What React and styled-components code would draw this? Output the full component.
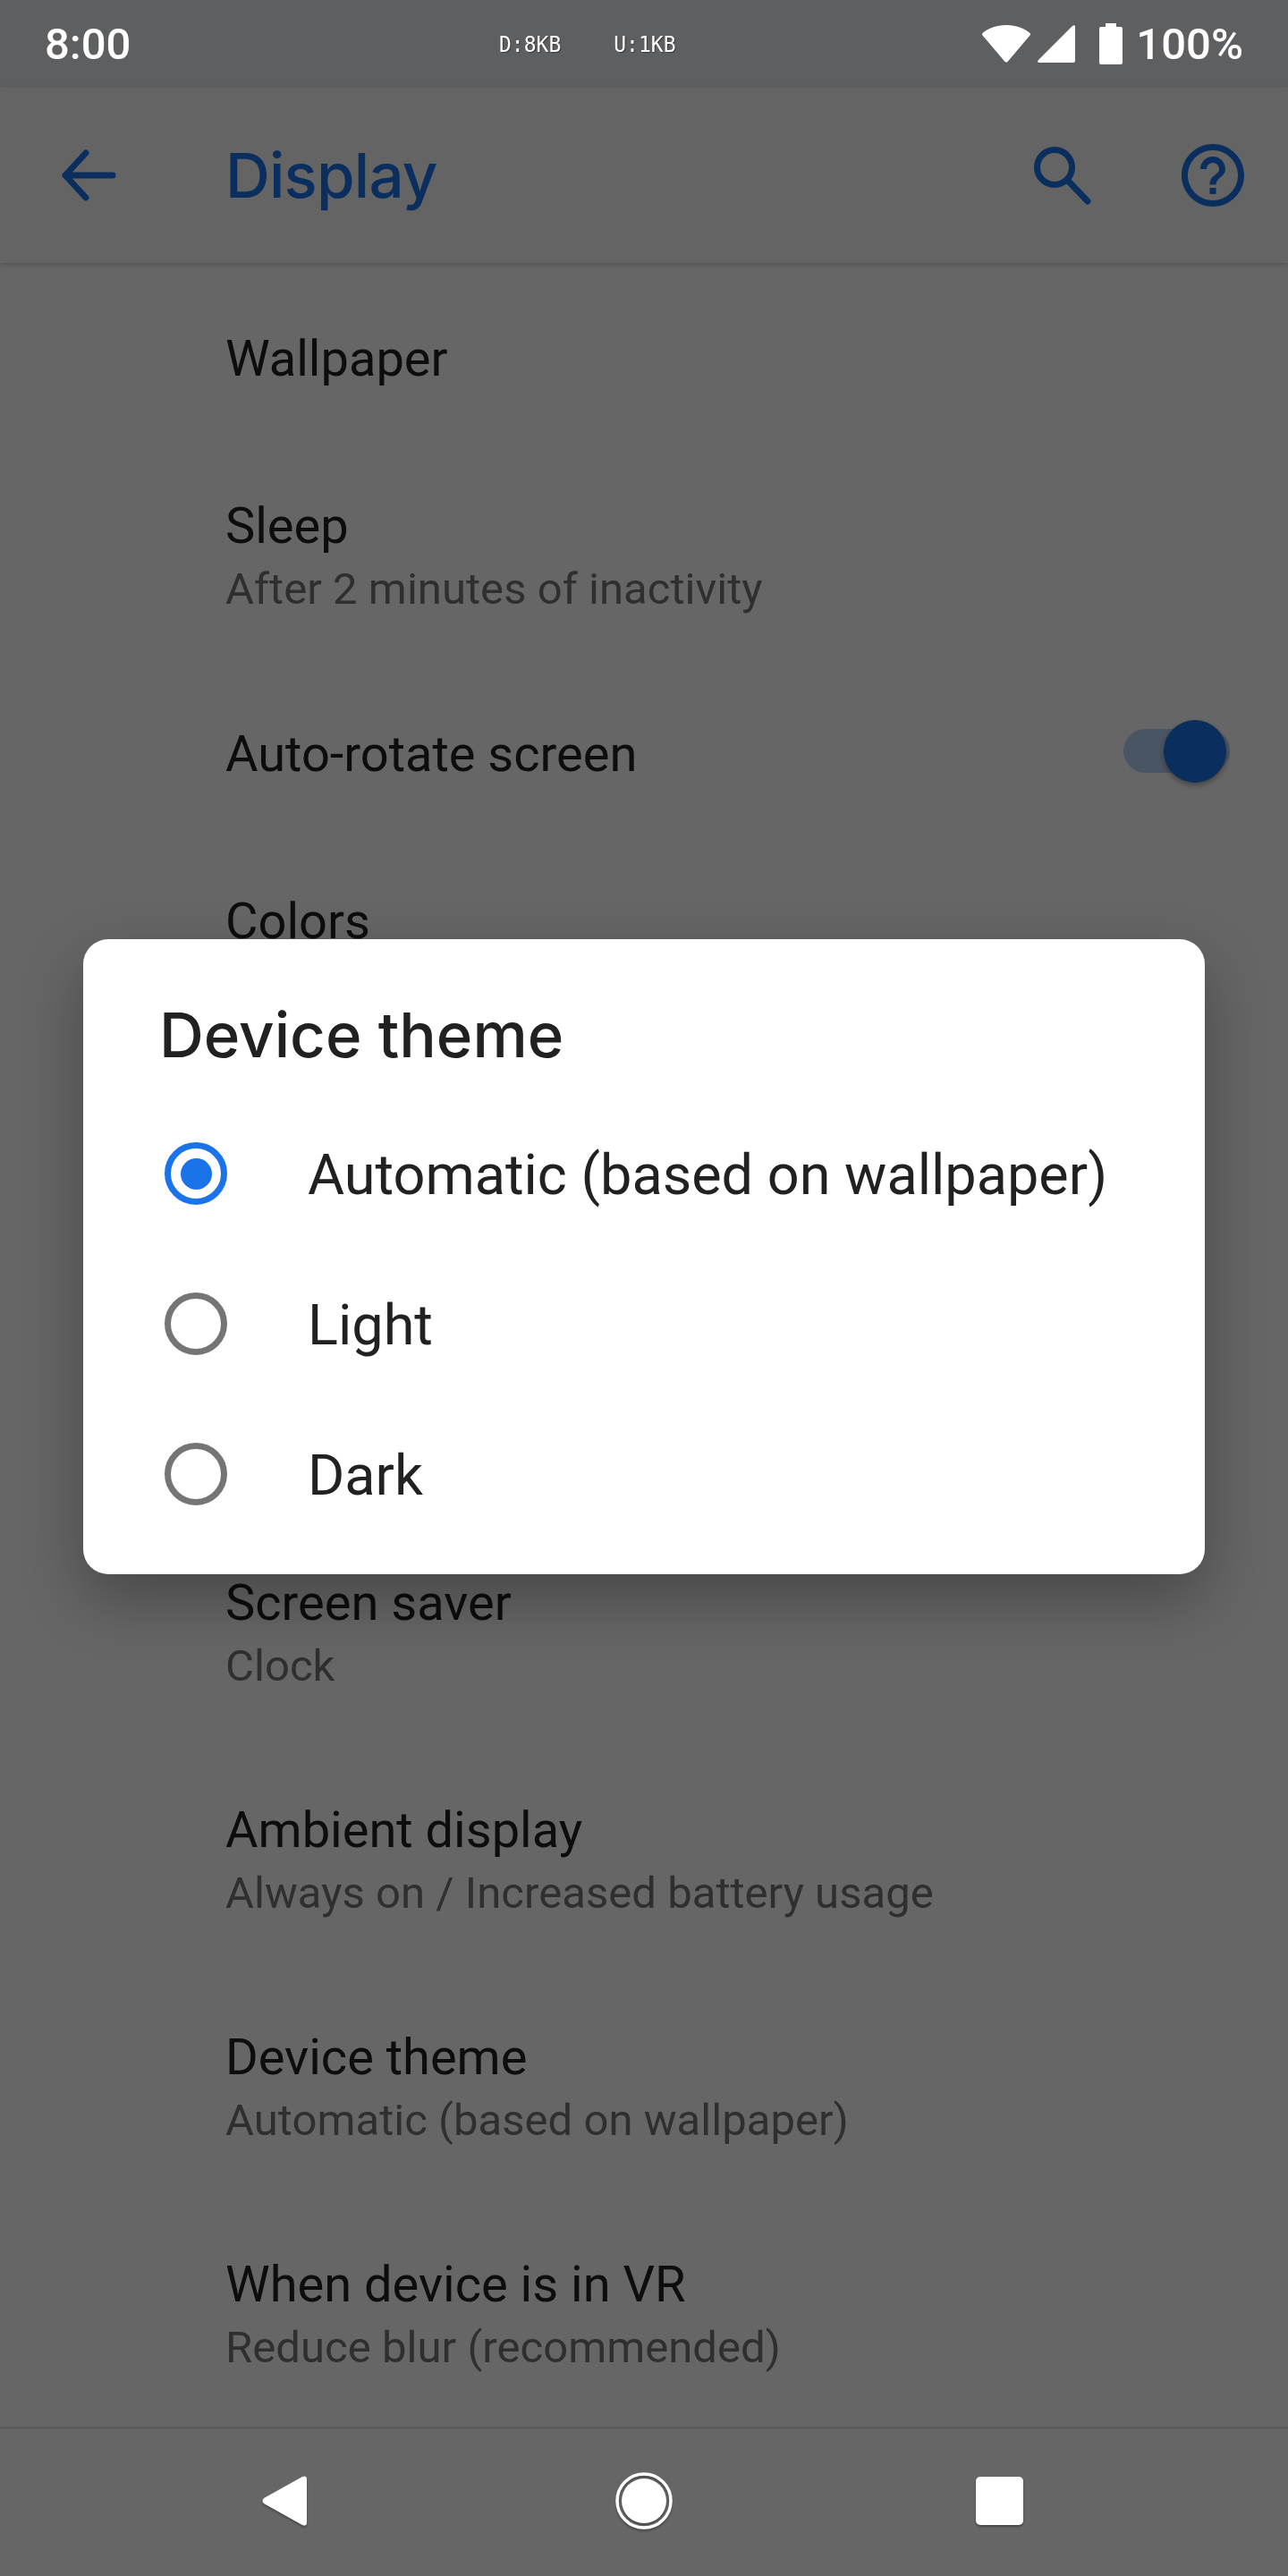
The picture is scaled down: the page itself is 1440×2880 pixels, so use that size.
import React from 'react';
import styled, { createGlobalStyle } from 'styled-components';

const GlobalStyle = createGlobalStyle`
  html, body {
    margin: 0;
    padding: 0;
    background: #666666;
    font-family: Roboto, "Liberation Sans", sans-serif;
  }
`;

const Phone = styled.div`
  width: 1440px;
  height: 2880px;
  display: flex;
  flex-direction: column;
  overflow: hidden;
`;

const StatusBar = styled.header`
  height: 98px;
  flex: none;
  display: flex;
  align-items: center;
  padding: 0 50px;
  box-sizing: border-box;
  background: #5e5f61;
  color: #ffffff;
`;

const Clock = styled.span`
  width: 508px;
  font-size: 49px;
  font-weight: 500;
`;

const Speeds = styled.div`
  display: flex;
  gap: 59px;
  font-family: "DejaVu Sans Mono", monospace;
  font-size: 23px;
  text-shadow: 1px 1px 1px rgba(0, 0, 0, 0.4);
  transform: scaleY(1.08);
`;

const StatusIcons = styled.div`
  margin-left: auto;
  display: flex;
  align-items: center;
`;

const Battery = styled.svg`
  margin: 0 15px 0 27px;
`;

const Cell = styled.svg`
  margin-left: 8px;
`;

const Percent = styled.span`
  font-size: 49px;
  font-weight: 500;
`;

const Main = styled.div`
  flex: 1;
  position: relative;
  display: flex;
  flex-direction: column;
  background: #ffffff;
  min-height: 0;
`;

const Toolbar = styled.div`
  height: 196px;
  flex: none;
  display: flex;
  align-items: center;
  background: #f7f9f8;
  box-shadow: 0 2px 5px rgba(0, 0, 0, 0.2);
`;

const NavButton = styled.button`
  width: 168px;
  height: 168px;
  flex: none;
  display: flex;
  align-items: center;
  justify-content: center;
  padding: 0;
  border: 0;
  background: none;
  color: #1a73e8;
`;

const BackButton = styled(NavButton)`
  width: 199px;
  margin-right: 53px;
  justify-content: flex-start;
  padding-left: 58px;
`;

const ScreenTitle = styled.h1`
  flex: 1;
  margin: 0;
  font-family: Inter, Roboto, sans-serif;
  font-size: 69px;
  letter-spacing: -0.8px;
  font-weight: 500;
  color: #1a73e8;
`;

const List = styled.div`
  padding-top: 13px;
  display: flex;
  flex-direction: column;
`;

const Row = styled.div`
  height: ${(p) => (p.$tall ? 254 : 188)}px;
  box-sizing: border-box;
  padding: ${(p) => (p.$tall ? 3 : 0)}px 65px 0 252px;
  display: flex;
  align-items: center;
  justify-content: space-between;
`;

const RowText = styled.div`
  display: flex;
  flex-direction: column;
`;

const RowTitle = styled.div`
  font-size: 56px;
  line-height: 71px;
  color: #212121;
`;

const RowSub = styled.div`
  font-size: 49px;
  line-height: 70px;
  min-height: 70px;
  letter-spacing: 0.05px;
  color: #757575;
`;

const HiddenRows = styled.div`
  height: 508px;
`;

const Switch = styled.div`
  position: relative;
  width: 119px;
  height: 49px;
  border-radius: 25px;
  background: rgba(26, 115, 232, 0.3);
  margin-top: -8px;
`;

const Thumb = styled.div`
  position: absolute;
  right: 4px;
  top: -10px;
  width: 70px;
  height: 70px;
  border-radius: 50%;
  background: #1a73e8;
  box-shadow: 0 3px 6px rgba(0, 0, 0, 0.35);
`;

const Scrim = styled.div`
  position: absolute;
  inset: 0;
  padding-bottom: 1px;
  display: flex;
  align-items: center;
  justify-content: center;
  background: rgba(0, 0, 0, 0.6);
`;

const Dialog = styled.section`
  width: 1254px;
  height: 710px;
  box-sizing: border-box;
  border-radius: 28px;
  background: #ffffff;
  box-shadow: 0 28px 70px rgba(0, 0, 0, 0.3);
`;

const DialogTitle = styled.h2`
  height: 178px;
  box-sizing: border-box;
  margin: 0;
  padding: 64px 0 0 85px;
  font-family: Inter, Roboto, sans-serif;
  font-size: 69px;
  line-height: 86px;
  font-weight: 500;
  color: #212121;
`;

const Option = styled.div`
  height: 168px;
  display: flex;
  align-items: center;
  padding-left: 91px;
  gap: 90px;
  font-size: 63px;
  color: #212121;
`;

const OptionLabel = styled.span`
  margin-top: 3px;
`;

const Radio = styled.span`
  width: 70px;
  height: 70px;
  flex: none;
  box-sizing: border-box;
  border-radius: 50%;
  border: 7px solid ${(p) => (p.$checked ? '#1a73e8' : '#757575')};
  display: flex;
  align-items: center;
  justify-content: center;
  &::after {
    content: '';
    width: 35px;
    height: 35px;
    border-radius: 50%;
    background: ${(p) => (p.$checked ? '#1a73e8' : 'transparent')};
  }
`;

const NavBar = styled.nav`
  height: 167px;
  flex: none;
  box-sizing: border-box;
  border-top: 3px solid #5c5c5c;
  background: #666666;
  display: grid;
  grid-template-columns: 318px 402px 398px;
  align-items: center;
  padding-bottom: 4px;
`;

const NavIcon = styled.svg`
  justify-self: end;
  transform: translateX(${(p) => p.$shift}px);
  filter: drop-shadow(0 2px 1px rgba(0, 0, 0, 0.3));
`;

const settingsTop = [
  { title: 'Wallpaper' },
  { title: 'Sleep', sub: 'After 2 minutes of inactivity' },
];

const settingsBottom = [
  { title: 'Screen saver', sub: 'Clock' },
  { title: 'Ambient display', sub: 'Always on / Increased battery usage' },
  { title: 'Device theme', sub: 'Automatic (based on wallpaper)' },
  { title: 'When device is in VR', sub: 'Reduce blur (recommended)' },
];

const themes = ['Automatic (based on wallpaper)', 'Light', 'Dark'];

const SettingRow = ({ title, sub }) => (
  <Row $tall={!!sub}>
    <RowText>
      <RowTitle>{title}</RowTitle>
      {sub && <RowSub>{sub}</RowSub>}
    </RowText>
  </Row>
);

const App = () => {
  return (
    <Phone>
      <GlobalStyle />
      <StatusBar>
        <Clock>8:00</Clock>
        <Speeds>
          <span>D:8KB</span>
          <span>U:1KB</span>
        </Speeds>
        <StatusIcons>
          <svg width="54" height="42" viewBox="0 0 54 42" fill="#fff">
            <path d="M27 0C38 0 47 3.5 53.5 9Q54.5 10.5 53.5 11.5L28.5 41Q27 42 25.5 41L0.5 11.5Q-0.5 10.5 0.5 9C7 3.5 16 0 27 0Z" />
          </svg>
          <Cell width="42" height="42" viewBox="0 0 42 42" fill="#fff">
            <path d="M39 1Q42 -1 42 2V40Q42 42 40 42H2Q-1 42 1 39Z" />
          </Cell>
          <Battery width="26" height="46" viewBox="0 0 26 46" fill="#fff">
            <path d="M7 0H19V4H24Q26 4 26 6V44Q26 46 24 46H2Q0 46 0 44V6Q0 4 2 4H7Z" />
          </Battery>
          <Percent>100%</Percent>
        </StatusIcons>
      </StatusBar>

      <Main>
        <Toolbar>
          <BackButton aria-label="Back">
            <svg width="84" height="84" viewBox="0 0 84 84" fill="none" stroke="currentColor" strokeWidth="7" strokeLinecap="round" strokeLinejoin="round">
              <path d="M15 42H68M38 17L15 42L38 67" />
            </svg>
          </BackButton>
          <ScreenTitle>Display</ScreenTitle>
          <NavButton aria-label="Search">
            <svg width="84" height="84" viewBox="0 0 84 84" fill="none" stroke="currentColor" strokeWidth="7" strokeLinecap="round">
              <circle cx="33" cy="33" r="19.5" />
              <path d="M48 48L70 71" />
            </svg>
          </NavButton>
          <NavButton aria-label="Help">
            <svg width="84" height="84" viewBox="0 0 24 24" fill="currentColor">
              <path d="M11 18h2v-2h-2v2zm1-16C6.48 2 2 6.48 2 12s4.48 10 10 10 10-4.48 10-10S17.52 2 12 2zm0 18c-4.41 0-8-3.59-8-8s3.59-8 8-8 8 3.59 8 8-3.59 8-8 8zm0-14c-2.21 0-4 1.79-4 4h2c0-1.1.9-2 2-2s2 .9 2 2c0 2-3 1.75-3 5h2c0-2.25 3-2.5 3-5 0-2.21-1.79-4-4-4z" />
            </svg>
          </NavButton>
        </Toolbar>

        <List>
          {settingsTop.map((s) => (
            <SettingRow key={s.title} {...s} />
          ))}
          <Row>
            <RowText>
              <RowTitle>Auto-rotate screen</RowTitle>
            </RowText>
            <Switch>
              <Thumb />
            </Switch>
          </Row>
          <Row $tall>
            <RowText>
              <RowTitle>Colors</RowTitle>
              <RowSub />
            </RowText>
          </Row>
          <HiddenRows />
          {settingsBottom.map((s) => (
            <SettingRow key={s.title} {...s} />
          ))}
        </List>

        <Scrim>
          <Dialog>
            <DialogTitle>Device theme</DialogTitle>
            {themes.map((t, i) => (
              <Option key={t}>
                <Radio $checked={i === 0} />
                <OptionLabel>{t}</OptionLabel>
              </Option>
            ))}
          </Dialog>
        </Scrim>
      </Main>

      <NavBar>
        <NavIcon $shift={25} width="50" height="56" viewBox="0 0 50 56" fill="#fff">
          <path d="M45 1Q50 -1 50 4V52Q50 57 45 55L2 31Q-1 28 2 25Z" />
        </NavIcon>
        <NavIcon $shift={32} width="64" height="64" viewBox="0 0 64 64">
          <circle cx="32" cy="32" r="30" fill="none" stroke="#fff" strokeWidth="3.5" />
          <circle cx="32" cy="32" r="25" fill="#fff" />
        </NavIcon>
        <NavIcon $shift={26} width="53" height="54" viewBox="0 0 53 54" fill="#fff">
          <rect width="53" height="54" rx="5" />
        </NavIcon>
      </NavBar>
    </Phone>
  );
};

export default App;
